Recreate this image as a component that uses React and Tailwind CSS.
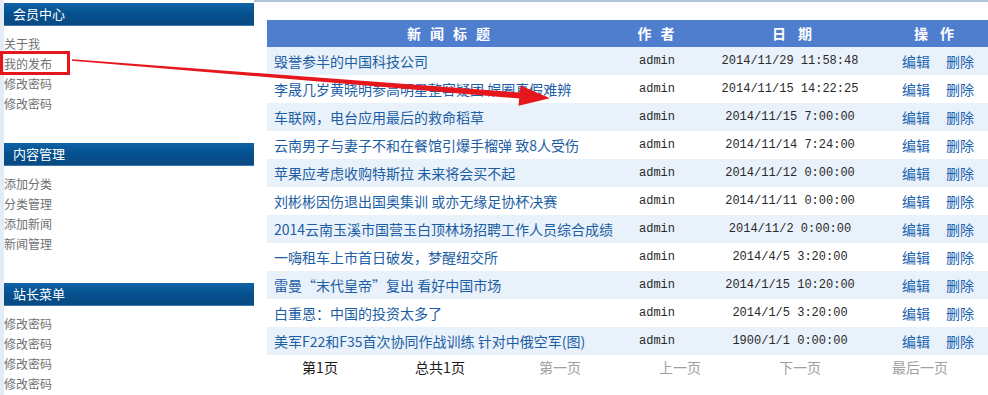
import React from "react";

const cjk = { fontFamily: '"Noto Sans CJK SC", "Liberation Sans", sans-serif' };
const mono = { fontFamily: '"Liberation Mono", monospace' };

const menus = [
  { title: "会员中心", links: ["关于我", "我的发布", "修改密码", "修改密码"] },
  { title: "内容管理", links: ["添加分类", "分类管理", "添加新闻", "新闻管理"] },
  { title: "站长菜单", links: ["修改密码", "修改密码", "修改密码", "修改密码"] },
];

const news = [
  ["毁誉参半的中国科技公司", "2014/11/29 11:58:48"],
  ["李晟几岁黄晓明参高明星整容疑团 娱圈真假难辨", "2014/11/15 14:22:25"],
  ["车联网，电台应用最后的救命稻草", "2014/11/15 7:00:00"],
  ["云南男子与妻子不和在餐馆引爆手榴弹 致8人受伤", "2014/11/14 7:24:00"],
  ["苹果应考虑收购特斯拉 未来将会买不起", "2014/11/12 0:00:00"],
  ["刘彬彬因伤退出国奥集训 或亦无缘足协杯决赛", "2014/11/11 0:00:00"],
  ["2014云南玉溪市国营玉白顶林场招聘工作人员综合成绩", "2014/11/2 0:00:00"],
  ["一嗨租车上市首日破发，梦醒纽交所", "2014/4/5 3:20:00"],
  ["雷曼“末代皇帝”复出 看好中国市场", "2014/1/15 10:20:00"],
  ["白重恩：中国的投资太多了", "2014/1/5 3:20:00"],
  ["美军F22和F35首次协同作战训练 针对中俄空军(图)", "1900/1/1 0:00:00"],
];

const pager = [
  ["第1页", true],
  ["总共1页", true],
  ["第一页", false],
  ["上一页", false],
  ["下一页", false],
  ["最后一页", false],
];

function Sidebar() {
  return (
    <div className="w-[254px] shrink-0 border-l-4 border-[#e3ebf4] pt-[3px]" style={cjk}>
      {menus.map((m) => (
        <div key={m.title} className="h-[140px]">
          <div className="h-[23px] flex items-center pl-[9px] text-[13px] text-white bg-gradient-to-b from-[#0f63a5] via-[#05508f] to-[#094a82] border-b border-[#3c78ad]">
            {m.title}
          </div>
          <div className="pt-[8px]">
            {m.links.map((l, i) => (
              <div key={i} className="h-[20px] leading-[20px] text-[12px] text-[#707070]">
                {l}
              </div>
            ))}
          </div>
        </div>
      ))}
    </div>
  );
}

function NewsTable() {
  return (
    <div className="w-[721px] ml-[13px] mt-[18px]" style={cjk}>
      <div className="flex h-[27px] items-center bg-[#4f7ecf] text-white font-bold text-[14px]">
        <div className="w-[353px] flex justify-center gap-[9px] pl-[10px]">
          <span>新</span>
          <span>闻</span>
          <span>标</span>
          <span>题</span>
        </div>
        <div className="w-[80px] flex justify-center gap-[9px] pr-[8px]">
          <span>作</span>
          <span>者</span>
        </div>
        <div className="w-[180px] flex justify-center gap-[12px] pl-[4px]">
          <span>日</span>
          <span>期</span>
        </div>
        <div className="w-[108px] flex justify-center gap-[12px]">
          <span>操</span>
          <span>作</span>
        </div>
      </div>
      {news.map(([title, date], i) => (
        <div
          key={i}
          className={
            "flex h-[28px] items-center text-[14px] " +
            (i % 2 === 0 ? "bg-[#e9f1fa]" : "bg-white")
          }
        >
          <div className="w-[353px] pl-[7px] text-[#1c5ea4] whitespace-nowrap overflow-hidden">{title}</div>
          <div className="w-[80px] text-center text-[12px] text-[#2a2a2a] pr-[6px]" style={mono}>
            admin
          </div>
          <div className="w-[180px] text-center text-[12px] text-[#2a2a2a]" style={mono}>
            {date}
          </div>
          <div className="w-[108px] flex justify-center gap-[16px] pl-[8px] text-[#1a62b0]">
            <span>编辑</span>
            <span>删除</span>
          </div>
        </div>
      ))}
    </div>
  );
}

export default function App() {
  return (
    <div className="relative w-[988px] h-[395px] overflow-hidden bg-white">
      <div className="flex h-full">
        <Sidebar />
        <div className="flex-1 border-t-2 border-[#b3c4d6]">
          <NewsTable />
          <div className="flex ml-[6px] h-[24px] items-center text-[14px]" style={cjk}>
            {pager.map(([t, on]) => (
              <div key={t} className={"w-[120px] text-center " + (on ? "text-[#1a1a1a]" : "text-[#a0a0a0]")}>
                {t}
              </div>
            ))}
          </div>
        </div>
      </div>

      <div className="absolute left-0 top-[51px] w-[70px] h-[24px] border-[3px] border-[#e5161c]" />

      <svg className="absolute left-0 top-0 pointer-events-none" width="988" height="395" viewBox="0 0 988 395">
        <polygon points="72,59.3 72,60.7 520,98.6 520,92.6" fill="#e5161c" />
        <polygon points="518.5,105.8 520.5,85.4 550,98.2" fill="#e5161c" />
      </svg>
    </div>
  );
}
